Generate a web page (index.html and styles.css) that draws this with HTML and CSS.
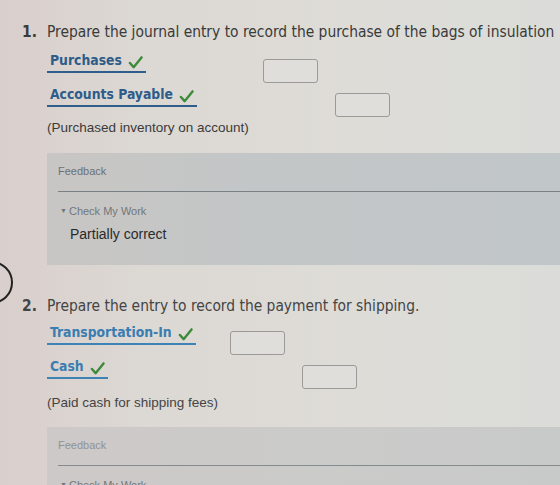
FILE: index.html
```html
<!DOCTYPE html>
<html lang="en">
<head>
  <meta charset="UTF-8">
  <title>Journal Entries</title>
  <link rel="stylesheet" href="styles.css">
</head>
<body>
  <div class="page">
    <span class="step-ring"></span>

    <!-- Question 1 -->
    <section class="question q1">
      <p class="prompt"><span class="num">1.</span>Prepare the journal entry to record the purchase of the bags of insulation</p>

      <div class="entry">
        <div class="entry-row">
          <span class="account">Purchases
            <svg class="check" viewBox="0 0 16 14"><path d="M2 7.5 L6 12 L14.5 1.5"></path></svg>
          </span>
          <span class="amount debit"></span>
        </div>
        <div class="entry-row">
          <span class="account">Accounts Payable
            <svg class="check" viewBox="0 0 16 14"><path d="M2 7.5 L6 12 L14.5 1.5"></path></svg>
          </span>
          <span class="amount credit"></span>
        </div>
      </div>

      <p class="memo">(Purchased inventory on account)</p>

      <div class="feedback">
        <div class="feedback-title">Feedback</div>
        <div class="feedback-body">
          <div class="check-work"><span class="caret">&#9660;</span>Check My Work</div>
          <div class="result">Partially correct</div>
        </div>
      </div>
    </section>

    <!-- Question 2 -->
    <section class="question q2">
      <p class="prompt"><span class="num">2.</span>Prepare the entry to record the payment for shipping.</p>

      <div class="entry">
        <div class="entry-row">
          <span class="account">Transportation-In
            <svg class="check" viewBox="0 0 16 14"><path d="M2 7.5 L6 12 L14.5 1.5"></path></svg>
          </span>
          <span class="amount debit"></span>
        </div>
        <div class="entry-row">
          <span class="account">Cash
            <svg class="check" viewBox="0 0 16 14"><path d="M2 7.5 L6 12 L14.5 1.5"></path></svg>
          </span>
          <span class="amount credit"></span>
        </div>
      </div>

      <p class="memo">(Paid cash for shipping fees)</p>

      <div class="feedback">
        <div class="feedback-title">Feedback</div>
        <div class="feedback-body">
          <div class="check-work"><span class="caret">&#9660;</span>Check My Work</div>
        </div>
      </div>
    </section>
  </div>
</body>
</html>
```

FILE: styles.css
```css
html, body {
  margin: 0;
  padding: 0;
  height: 100%;
  overflow: hidden;
}

body {
  font-family: "DejaVu Sans Condensed", "DejaVu Sans", Verdana, sans-serif;
  color: #3b3b3b;
  background: linear-gradient(to right, #d9cfcc 0, #dcd8d3 25%, #dedcd7 60%, #dbdcd9 100%);
}

.page {
  position: relative;
  padding: 0 0 0 47px;
}

/* step marker peeking in from the left edge */
.step-ring {
  position: absolute;
  left: -30px;
  top: 261px;
  width: 39px;
  height: 39px;
  border: 2px solid #222;
  border-radius: 50%;
}

.question {
  margin: 0;
}

.prompt {
  position: relative;
  margin: 0;
  font-size: 15.4px;
  line-height: 18px;
  white-space: nowrap;
  color: #3a3a3a;
}

.prompt .num {
  position: absolute;
  left: -25px;
  font-weight: bold;
}

.q1 .prompt {
  padding-top: 23px;
}

.entry {
  display: flex;
  flex-direction: column;
  gap: 3px;
}

.q1 .entry {
  margin-top: 11px;
}

.entry-row {
  display: grid;
  grid-template-columns: 199px 55px 55px;
  column-gap: 17px;
  align-items: start;
}

.q2 .entry-row {
  grid-template-columns: 166px 55px 55px;
}

.account {
  justify-self: start;
  display: flex;
  align-items: center;
  gap: 6px;
  padding: 0 3px 2px 3px;
  border-bottom: 2px solid #2f5e8c;
  font-weight: bold;
  font-size: 13.8px;
  line-height: 17px;
  color: #2d5c8a;
}

.q2 .account {
  color: #3a7db0;
  border-bottom-color: #3d83b5;
}

.check {
  width: 15px;
  height: 13px;
  margin-top: 3px;
}

.check path {
  fill: none;
  stroke: #3d8a3b;
  stroke-width: 2.6;
  stroke-linecap: round;
  stroke-linejoin: round;
}

.amount {
  height: 22px;
  margin-top: 7px;
  border: 1.5px solid #9a9a98;
  border-radius: 3px;
  background: #dfdedb;
}

.entry-row .debit {
  grid-column: 2;
}

.entry-row .credit {
  grid-column: 3;
}

.memo {
  margin: 2px 0 0 0;
  font-family: "Liberation Sans", Arial, sans-serif;
  font-size: 13.5px;
  line-height: 17px;
  color: #3a3a3a;
}

.feedback {
  margin-top: 17px;
  padding: 11px 0 0 11px;
  background: linear-gradient(to right, #c8c6c4 0, #c3c6c7 40%, #c1c6c8 100%);
  color: #6c7174;
}

.feedback-title {
  font-family: "Liberation Sans", Arial, sans-serif;
  font-size: 11px;
  line-height: 14px;
  padding-bottom: 13px;
  border-bottom: 1px solid #7a8184;
}

.feedback-body {
  padding: 12px 0 22px 2px;
}

.check-work {
  font-family: "Liberation Sans", Arial, sans-serif;
  font-size: 11px;
  line-height: 14px;
  color: #72777a;
}

.caret {
  font-size: 7px;
  margin-right: 2px;
  vertical-align: 2px;
}

.result {
  margin: 8px 0 0 10px;
  font-family: "Liberation Sans", Arial, sans-serif;
  font-size: 14px;
  line-height: 17px;
  color: #2a2a2a;
}

.q2 {
  margin-top: 32px;
}

.q2 .entry {
  margin-top: 9px;
}

.q2 .memo {
  margin-top: 5px;
}

.q2 .prompt,
.q2 .memo {
  color: #444;
}

.q2 .feedback {
  margin-top: 16px;
  background: linear-gradient(to right, #cdc9c8 0, #cbcbca 50%, #c8cac9 100%);
  color: #8f9396;
}

.q2 .feedback-title {
  border-bottom-color: #858a8c;
}
```
